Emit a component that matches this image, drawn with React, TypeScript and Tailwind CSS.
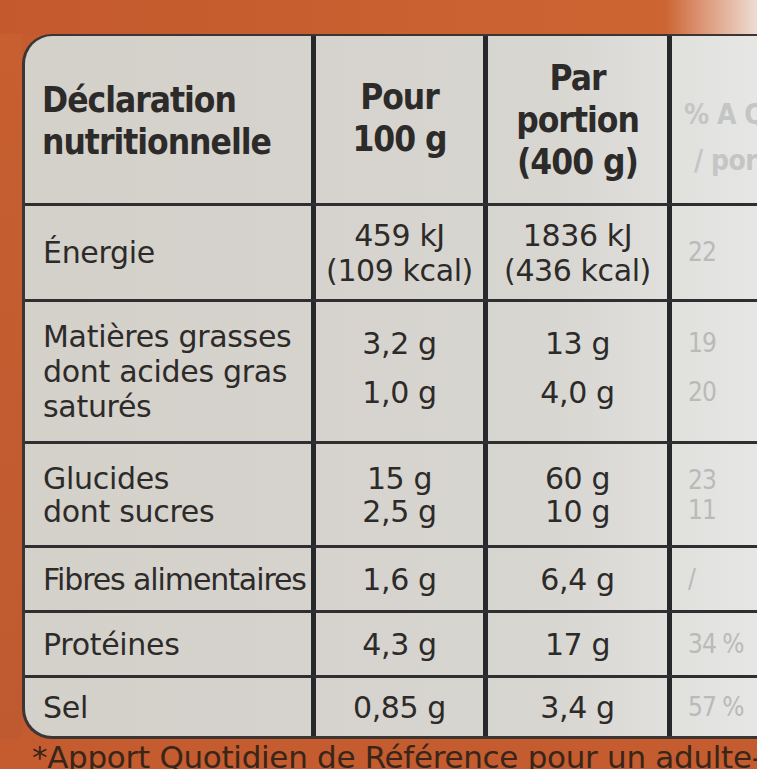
const head = "font-['DejaVu_Sans_Condensed','DejaVu_Sans',sans-serif]";
const body = "font-['DejaVu_Sans',sans-serif]";

type Row = {
  label: string[];
  per100: string[];
  portion: string[];
  ar: string[];
  h: string;
  tight?: boolean;
};

const rows: Row[] = [
  { label: ["Énergie"], per100: ["459 kJ", "(109 kcal)"], portion: ["1836 kJ", "(436 kcal)"], ar: ["22"], h: "h-[96px]" },
  { label: ["Matières grasses", "dont acides gras", "saturés"], per100: ["3,2 g", "1,0 g"], portion: ["13 g", "4,0 g"], ar: ["19", "20"], h: "h-[142px]" },
  { label: ["Glucides", "dont sucres"], per100: ["15 g", "2,5 g"], portion: ["60 g", "10 g"], ar: ["23", "11"], h: "h-[104px]", tight: true },
  { label: ["Fibres alimentaires"], per100: ["1,6 g"], portion: ["6,4 g"], ar: ["/"], h: "h-[65px]" },
  { label: ["Protéines"], per100: ["4,3 g"], portion: ["17 g"], ar: ["34 %"], h: "h-[65px]" },
  { label: ["Sel"], per100: ["0,85 g"], portion: ["3,4 g"], ar: ["57 %"], h: "h-[58px]" },
];

const App = () => {
  return (
    <div className={`w-[757px] h-[769px] overflow-hidden bg-[#c45c2f] ${body}`}>
      {/* orange band */}
      <div className="h-[34px] bg-gradient-to-r from-[#c3592d] via-[#cc6532] via-88% to-[#ecdcd4]" />
      <div className="flex">
        <div className="w-[22px] shrink-0 bg-gradient-to-b from-[#c75f30] to-[#bf5a30]" />
        {/* label card */}
        <div className="w-[760px] shrink-0 rounded-tl-[30px] rounded-bl-[30px] border-l-[3px] border-t-[2px] border-b-[3px] border-[#3b3633] bg-gradient-to-r from-[#d4d0ca] via-[#d8d6d1] via-70% to-[#e8e9e8] overflow-hidden text-[#2d2b29]">
          {/* header */}
          <div className={`flex h-[170px] border-b-[3px] border-[#2f2f31] ${head} font-bold text-[35px] leading-[42px] tracking-[-1px]`}>
            <div className="w-[291px] shrink-0 border-r-[5px] border-[#26282c] flex flex-col justify-center pl-[17px] pt-[2px]">
              <span>Déclaration</span>
              <span>nutritionnelle</span>
            </div>
            <div className="w-[172px] shrink-0 border-r-[5px] border-[#26282c] flex flex-col justify-center items-center pb-[4px]">
              <span>Pour</span>
              <span>100 g</span>
            </div>
            <div className="w-[184px] shrink-0 border-r-[5px] border-[#26282c] flex flex-col justify-center items-center">
              <span>Par</span>
              <span>portion</span>
              <span>(400 g)</span>
            </div>
            <div className="flex-1 flex flex-col justify-center pl-[12px] pt-[36px] text-[28px] leading-[46px] tracking-[-0.5px] text-[#c4c5c5]">
              <span>% A Q</span>
              <span className="pl-[10px]">/ port</span>
            </div>
          </div>
          {rows.map((r, i) => (
            <div
              key={i}
              className={`flex ${r.h} ${i < rows.length - 1 ? "border-b-[3px]" : ""} border-[#2f2f31] text-[30px] ${r.tight ? "leading-[33px]" : "leading-[35px]"}`}
            >
              <div className="w-[291px] shrink-0 border-r-[5px] border-[#26282c] flex flex-col justify-center pl-[18px]">
                {r.label.map((t) => (
                  <span
                    key={t}
                    className={`whitespace-nowrap ${t.length > 17 ? "tracking-[-1.1px]" : "tracking-[-0.3px]"}`}
                  >
                    {t}
                  </span>
                ))}
              </div>
              <div
                className={`w-[172px] shrink-0 border-r-[5px] border-[#26282c] flex flex-col justify-center items-center tracking-[-0.4px] ${r.label.length === 3 ? "gap-[14px] pb-[8px]" : ""}`}
              >
                {r.per100.map((t) => (
                  <span key={t} className="whitespace-nowrap">{t}</span>
                ))}
              </div>
              <div
                className={`w-[184px] shrink-0 border-r-[5px] border-[#26282c] flex flex-col justify-center items-center tracking-[-0.4px] ${r.label.length === 3 ? "gap-[14px] pb-[8px]" : ""}`}
              >
                {r.portion.map((t) => (
                  <span key={t} className="whitespace-nowrap">{t}</span>
                ))}
              </div>
              <div
                className={`flex-1 flex flex-col justify-center pl-[16px] text-[26px] tracking-[-1px] text-[#b9bab9] ${head} ${r.label.length === 3 ? "gap-[14px] pb-[8px]" : ""} ${r.tight ? "leading-[30px]" : "leading-[35px]"}`}
              >
                {r.ar.map((t) => (
                  <span key={t} className="whitespace-nowrap">{t}</span>
                ))}
              </div>
            </div>
          ))}
        </div>
      </div>
      {/* footnote */}
      <div className="pl-[32px] text-[31px] leading-[36px] text-[#3a2519] whitespace-nowrap tracking-[-0.3px]">
        *Apport Quotidien de Référence pour un adulte-
      </div>
    </div>
  );
};

export default App;
